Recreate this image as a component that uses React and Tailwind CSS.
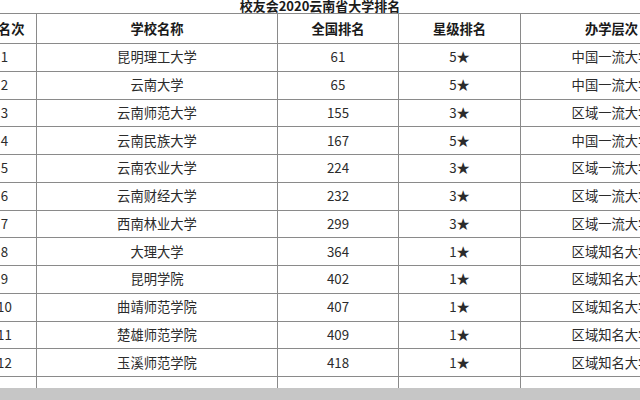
import React from "react";

const rows = [
    [1, "昆明理工大学", 61, "5★", "中国一流大学"],
    [2, "云南大学", 65, "5★", "中国一流大学"],
    [3, "云南师范大学", 155, "3★", "区域一流大学"],
    [4, "云南民族大学", 167, "5★", "中国一流大学"],
    [5, "云南农业大学", 224, "3★", "区域一流大学"],
    [6, "云南财经大学", 232, "3★", "区域一流大学"],
    [7, "西南林业大学", 299, "3★", "区域一流大学"],
    [8, "大理大学", 364, "1★", "区域知名大学"],
    [9, "昆明学院", 402, "1★", "区域知名大学"],
    [10, "曲靖师范学院", 407, "1★", "区域知名大学"],
    [11, "楚雄师范学院", 409, "1★", "区域知名大学"],
    [12, "玉溪师范学院", 418, "1★", "区域知名大学"],
];

const cell = "border border-[#8a8a8a] text-center p-0 whitespace-nowrap overflow-hidden";

const App = () => {
    return (
        <div
            className="w-[640px] h-[400px] overflow-hidden bg-white flex flex-col text-[#2b2b2b]"
            style={{ fontFamily: '"Noto Sans CJK SC", "Noto Sans", sans-serif' }}
        >
            <div className="h-[13px] leading-[12px] text-[13px] font-bold text-center text-[#1a1a1a] overflow-visible">
                校友会2020云南省大学排名
            </div>
            <table className="ml-[-28px] w-[730px] border-collapse table-fixed text-[13.3px] shrink-0">
                <colgroup>
                    <col className="w-[64px]" />
                    <col className="w-[241px]" />
                    <col className="w-[121px]" />
                    <col className="w-[122px]" />
                    <col className="w-[182px]" />
                </colgroup>
                <thead>
                    <tr className="h-[30px] font-bold text-[#1a1a1a]">
                        <th className={cell}>排名次</th>
                        <th className={cell}>学校名称</th>
                        <th className={cell}>全国排名</th>
                        <th className={cell}>星级排名</th>
                        <th className={cell}>办学层次</th>
                    </tr>
                </thead>
                <tbody>
                    {rows.map((r) => (
                        <tr key={r[0]} className="h-[27.75px]">
                            <td className={cell}>{r[0]}</td>
                            <td className={cell}>{r[1]}</td>
                            <td className={cell}>{r[2]}</td>
                            <td className={cell}>{r[3]}</td>
                            <td className={cell}>{r[4]}</td>
                        </tr>
                    ))}
                    <tr className="h-[11px]">
                        <td className="border-x border-[#8a8a8a] p-0"></td>
                        <td className="border-x border-[#8a8a8a] p-0"></td>
                        <td className="border-x border-[#8a8a8a] p-0"></td>
                        <td className="border-x border-[#8a8a8a] p-0"></td>
                        <td className="border-x border-[#8a8a8a] p-0"></td>
                    </tr>
                </tbody>
            </table>
            <div className="flex-1 bg-[#c6c6c6]"></div>
        </div>
    );
};

export default App;
